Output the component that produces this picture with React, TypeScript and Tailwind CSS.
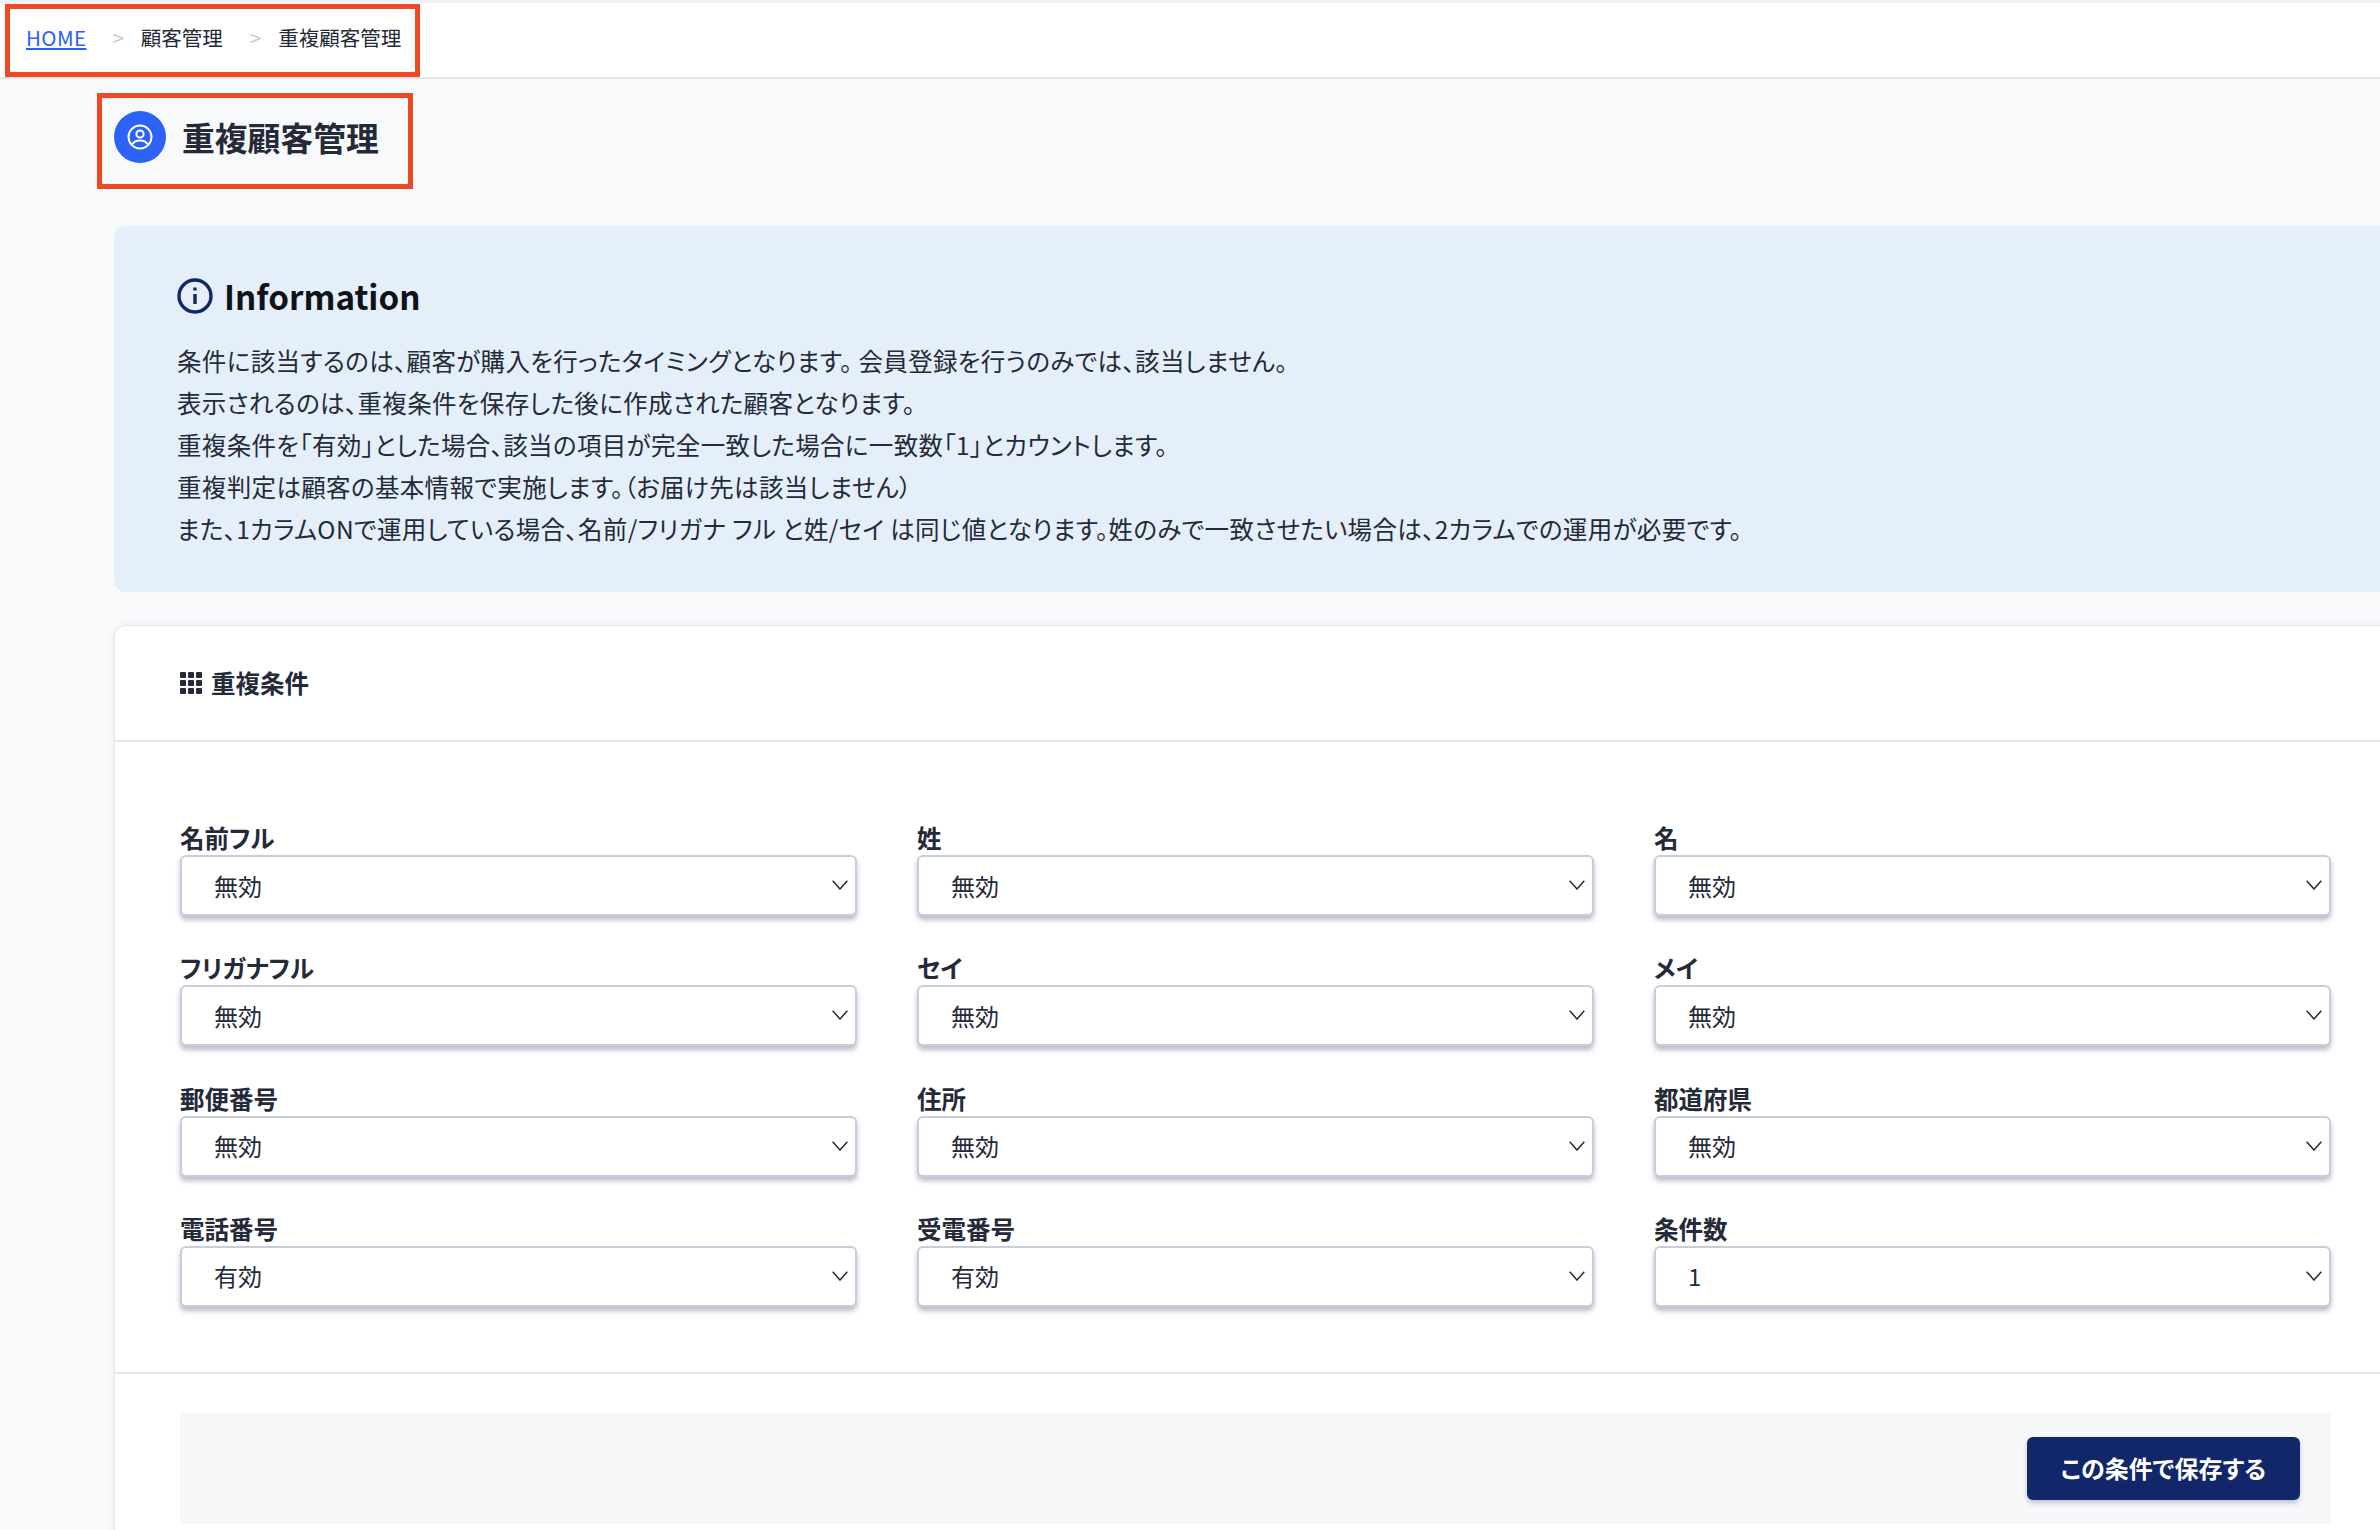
const fields = [
  { label: "名前フル", value: "無効" },
  { label: "姓", value: "無効" },
  { label: "名", value: "無効" },
  { label: "フリガナフル", value: "無効" },
  { label: "セイ", value: "無効" },
  { label: "メイ", value: "無効" },
  { label: "郵便番号", value: "無効" },
  { label: "住所", value: "無効" },
  { label: "都道府県", value: "無効" },
  { label: "電話番号", value: "有効" },
  { label: "受電番号", value: "有効" },
  { label: "条件数", value: "1", options: ["1", "2", "3"] },
];

const infoLines = [
  "条件に該当するのは、顧客が購入を行ったタイミングとなります。 会員登録を行うのみでは、該当しません。",
  "表示されるのは、重複条件を保存した後に作成された顧客となります。",
  "重複条件を「有効」とした場合、該当の項目が完全一致した場合に一致数「1」とカウントします。",
  "重複判定は顧客の基本情報で実施します。（お届け先は該当しません）",
  "また、1カラムONで運用している場合、名前/フリガナ フル と姓/セイ は同じ値となります。姓のみで一致させたい場合は、2カラムでの運用が必要です。",
];

const UserCircle = () => (
  <svg viewBox="0 0 26 26" className="w-[26px] h-[26px]" fill="none" stroke="white" strokeWidth="2">
    <circle cx="13" cy="13" r="11.500" />
    <circle cx="13" cy="10" r="3.600" />
    <path d="M5.500 20c1.600-2.600 4.400-3.600 7.500-3.600s5.900 1 7.500 3.600" />
  </svg>
);

const InfoIcon = () => (
  <svg viewBox="0 0 36 36" className="w-[36px] h-[36px] shrink-0" fill="none" stroke="#12266a" strokeWidth="3.400">
    <circle cx="18" cy="18" r="16" />
    <path d="M18 16v10" />
    <path d="M18 9.500v3" />
  </svg>
);

const GridIcon = () => (
  <svg viewBox="0 0 22 22" className="w-[22px] h-[22px] shrink-0" fill="#252a38">
    {[0, 8, 16].map((y) =>
      [0, 8, 16].map((x) => <rect key={`${x}-${y}`} x={x} y={y} width="6" height="6" rx="1" />)
    )}
  </svg>
);

const Chevron = () => (
  <svg
    viewBox="0 0 16 10"
    className="absolute right-[9px] top-[25px] w-[16px] h-[10px] pointer-events-none"
    fill="none"
    stroke="#252a38"
    strokeWidth="1.500"
  >
    <path d="M0.700 0.700L8 9L15.300 0.700" />
  </svg>
);

const Field = ({ label, value, options }: { label: string; value: string; options?: string[] }) => (
  <div>
    <label className="block h-[32px] text-[24.500px] leading-[30px] font-bold text-[#252a38]">{label}</label>
    <div className="relative">
      <select
        defaultValue={value}
        className="block w-full h-[61px] appearance-none rounded-[6px] border-2 border-[#c8cddc] bg-white pl-[32px] pr-[40px] text-[24px] text-[#252a38] shadow-[0_4px_5px_rgba(60,66,110,0.35)]"
      >
        {(options ?? ["無効", "有効"]).map((o) => (
          <option key={o} value={o}>
            {o}
          </option>
        ))}
      </select>
      <Chevron />
    </div>
  </div>
);

export default function App() {
  return (
    <div className="h-[1530px] overflow-hidden bg-[#f7f9fb] font-['Noto_Sans_CJK_JP','Noto_Sans',sans-serif] [font-feature-settings:'palt'] text-[#252a38]">
      {/* Breadcrumb */}
      <header className="h-[79px] bg-white border-t-[3px] border-t-[#f1f2f4] border-b-2 border-b-[#e3e4e8] pl-[5px] pt-[1px]">
        <nav className="inline-flex h-[73px] w-[415px] items-center border-[5px] border-[#ee4827] pl-[16px] pb-[6px] text-[20.500px]">
          <a href="#" className="text-[#2d62f0] underline tracking-[0.4px]">
            HOME
          </a>
          <span className="ml-[26px] mr-[17px] text-[#c5c9d6]">&gt;</span>
          <span>顧客管理</span>
          <span className="ml-[27px] mr-[17px] text-[#c5c9d6]">&gt;</span>
          <span>重複顧客管理</span>
        </nav>
      </header>

      <main className="pl-[114px]">
        {/* Page title */}
        <div className="-ml-[17px] mt-[14px] flex h-[96px] w-[316px] items-start gap-[16px] border-[5px] border-[#ee4827] pl-[12px] pt-[13px]">
          <div className="flex h-[52px] w-[52px] items-center justify-center rounded-full bg-[#2d62f6]">
            <UserCircle />
          </div>
          <h1 className="text-[32.800px] leading-[52px] font-bold">重複顧客管理</h1>
        </div>

        {/* Information */}
        <section className="-mr-[20px] mt-[37px] h-[366px] rounded-[12px] bg-[#e4eff9] pl-[63px] pt-[51px]">
          <div className="flex h-[38px] items-center gap-[11px]">
            <InfoIcon />
            <h2 className="text-[33.200px] leading-[38px] font-bold text-[#10121a]">Information</h2>
          </div>
          <ul className="mt-[25px] text-[24.500px] leading-[41.900px] tracking-[0.35px]">
            {infoLines.map((line) => (
              <li key={line}>{line}</li>
            ))}
          </ul>
        </section>

        {/* Conditions card */}
        <section className="-mr-[20px] mt-[33px] rounded-[12px] border border-[#e5e7eb] bg-white pb-[40px] shadow-[0_0_6px_rgba(60,66,110,0.08)]">
          <div className="flex h-[116px] items-center gap-[9px] border-b-2 border-[#e3e4e8] pl-[65px]">
            <GridIcon />
            <h3 className="text-[24.500px] font-bold">重複条件</h3>
          </div>
          <div className="grid w-[2151px] ml-[65px] grid-cols-3 gap-x-[60px] gap-y-[37.300px] pt-[81px] pb-[65px]">
            {fields.map((f) => (
              <Field key={f.label} label={f.label} value={f.value} options={f.options} />
            ))}
          </div>
          <div className="border-t-2 border-[#e3e4e8] pt-[39px]">
            <div className="ml-[65px] flex h-[111px] w-[2151px] justify-end bg-[#f7f8fa] pr-[31px] pt-[24px]">
              <button className="h-[63px] w-[273px] rounded-[6px] bg-[#12266a] text-[24px] font-bold text-white shadow-[0_3px_5px_rgba(18,38,106,0.25)]">
                この条件で保存する
              </button>
            </div>
          </div>
        </section>
      </main>
    </div>
  );
}
